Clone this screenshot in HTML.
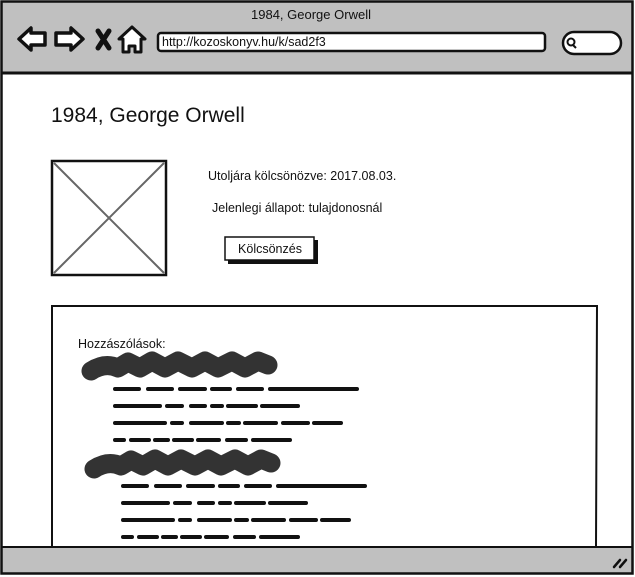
<!DOCTYPE html>
<html><head><meta charset="utf-8"><style>
html,body{margin:0;padding:0;background:#fff;}
svg{display:block}
text{font-family:"Liberation Sans",sans-serif;fill:#111}
</style></head><body>
<svg width="635" height="577" viewBox="0 0 635 577" xmlns="http://www.w3.org/2000/svg">
<rect x="0" y="0" width="635" height="577" fill="#fff"/>
<rect x="1" y="1" width="632" height="72" fill="#c0c0c0"/>
<rect x="1" y="547" width="632" height="27" fill="#c0c0c0"/>
<rect x="1.5" y="1.5" width="631" height="572" fill="none" stroke="#111" stroke-width="2.5"/>
<line x1="2" y1="73" x2="633" y2="73" stroke="#111" stroke-width="3"/>
<line x1="2" y1="547" x2="633" y2="547" stroke="#111" stroke-width="2"/>
<text x="311" y="19" font-size="13" text-anchor="middle">1984, George Orwell</text>
<path d="M19,39 L31,28 L31,33 L45,33 L45,45 L31,45 L31,50 Z" fill="#fff" stroke="#111" stroke-width="3.5" stroke-linejoin="round"/>
<path d="M83,39 L71,28 L71,33 L56,33 L56,45 L71,45 L71,50 Z" fill="#fff" stroke="#111" stroke-width="3.5" stroke-linejoin="round"/>
<path d="M98,31 L109,48 M109,31 L98,48" stroke="#111" stroke-width="5" stroke-linecap="round"/>
<path d="M132,27 L145,39 L141,39 L141,52 L135,52 L135,46 L129,46 L129,52 L123,52 L123,39 L119,39 Z" fill="#fff" stroke="#111" stroke-width="3" stroke-linejoin="round"/>
<rect x="158" y="33" width="387" height="18" rx="3" fill="#fff" stroke="#111" stroke-width="2.5"/>
<text x="162" y="46" font-size="12.5">http://kozoskonyv.hu/k/sad2f3</text>
<rect x="563" y="32" width="58" height="22" rx="11" fill="#fff" stroke="#111" stroke-width="2.5"/>
<circle cx="571" cy="42" r="3.5" fill="none" stroke="#111" stroke-width="2"/>
<line x1="573" y1="45" x2="576" y2="48" stroke="#111" stroke-width="2"/>
<path d="M614,567 L620,560 M620,567 L626,560" stroke="#111" stroke-width="2.5" stroke-linecap="round"/>
<text x="51" y="122" font-size="21">1984, George Orwell</text>
<rect x="52" y="161" width="114" height="114" fill="#fff" stroke="#111" stroke-width="2.5"/>
<path d="M54,163 L164,273 M164,163 L54,273" stroke="#666" stroke-width="2"/>
<text x="208" y="180" font-size="12.5">Utoljára kölcsönözve: 2017.08.03.</text>
<text x="212" y="212" font-size="12.5">Jelenlegi állapot: tulajdonosnál</text>
<rect x="228" y="240" width="90" height="24" fill="#111"/>
<rect x="225" y="237" width="89" height="23" fill="#fff" stroke="#111" stroke-width="1.5"/>
<text x="270" y="253" font-size="12.5" text-anchor="middle">Kölcsönzés</text>
<path d="M51,306 L597,306 L596,547 M52,306 L52,547" fill="none" stroke="#111" stroke-width="2"/>
<text x="78" y="348" font-size="12.5">Hozzászólások:</text>
<g stroke="#333" stroke-linecap="round" stroke-linejoin="round" fill="none">
<path d="M91,371 Q105,362 118,368 L128,362 L140,368 L152,361 L165,368 L178,361 L192,368 L205,361 L218,368 L232,361 L245,368 L258,361 L268,365" stroke-width="19"/>
<path d="M94,469 Q108,460 121,466 L131,460 L143,466 L155,459 L168,466 L181,459 L195,466 L208,459 L221,466 L235,459 L248,466 L261,459 L271,463" stroke-width="19"/>
</g>
<g stroke="#111" stroke-width="4" stroke-linecap="round">
<g>
<path d="M115,389 H139 M148,389 H172 M180,389 H205 M212,389 H230 M238,389 H262 M270,389 H357"/>
<path d="M115,406 H160 M167,406 H182 M191,406 H205 M212,406 H222 M228,406 H256 M262,406 H298"/>
<path d="M115,423 H165 M172,423 H182 M191,423 H222 M228,423 H239 M245,423 H276 M283,423 H308 M314,423 H341"/>
<path d="M115,440 H124 M131,440 H149 M155,440 H168 M174,440 H192 M198,440 H219 M227,440 H246 M253,440 H290"/>
</g>
<g transform="translate(8,97)">
<path d="M115,389 H139 M148,389 H172 M180,389 H205 M212,389 H230 M238,389 H262 M270,389 H357"/>
<path d="M115,406 H160 M167,406 H182 M191,406 H205 M212,406 H222 M228,406 H256 M262,406 H298"/>
<path d="M115,423 H165 M172,423 H182 M191,423 H222 M228,423 H239 M245,423 H276 M283,423 H308 M314,423 H341"/>
<path d="M115,440 H124 M131,440 H149 M155,440 H168 M174,440 H192 M198,440 H219 M227,440 H246 M253,440 H290"/>
</g>
</g>
</svg>
</body></html>
